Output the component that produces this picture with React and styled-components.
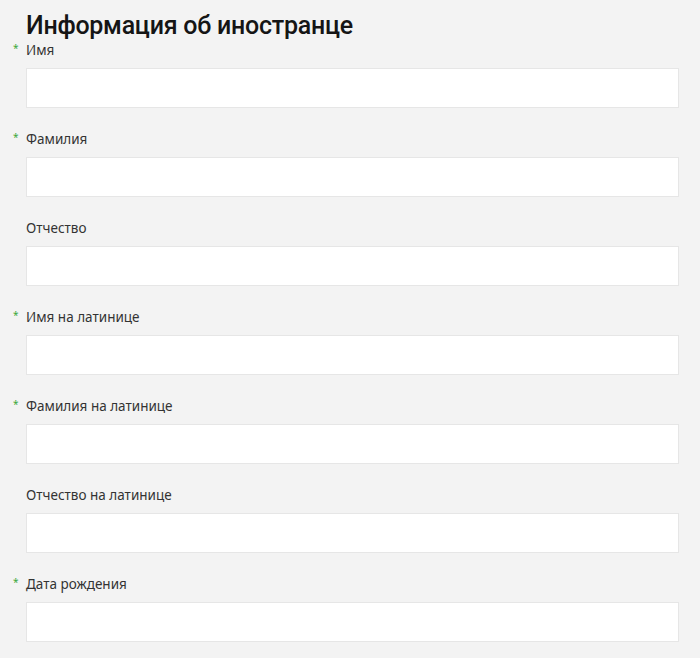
import React from "react";
import styled, { createGlobalStyle } from "styled-components";

const Global = createGlobalStyle`
  html, body { margin: 0; padding: 0; background: #f3f3f3; }
  body { font-family: "Noto Sans", "Open Sans", sans-serif; }
`;

const Page = styled.div`
  padding: 9px 21px 0 26px;
  display: flex;
  flex-direction: column;
`;

const Title = styled.h2`
  margin: 0 0 -3px 0;
  font-family: Roboto, "Noto Sans", sans-serif;
  font-size: 25px;
  line-height: 34px;
  font-weight: 500;
  color: #151515;
  letter-spacing: -0.25px;
`;

const Form = styled.div`
  display: flex;
  flex-direction: column;
  gap: 21px;
`;

const Field = styled.div`
  display: flex;
  flex-direction: column;
  gap: 8px;
`;

const Label = styled.label`
  display: block;
  height: 20px;
  font-size: 13.5px;
  line-height: 20px;
  color: #333;
`;

const Star = styled.span`
  display: inline-block;
  width: 13px;
  margin-left: -13px;
  line-height: 1;
  vertical-align: 3px;
  color: #3aa83a;
  font-size: 10px;
  visibility: ${(p) => (p.$show ? "visible" : "hidden")};
`;

const Input = styled.input`
  display: block;
  box-sizing: border-box;
  height: 40px;
  width: 100%;
  margin: 0;
  background: #fff;
  border: 1px solid #e6e6e6;
  border-radius: 0;
  outline: none;
  padding: 0 10px;
  font: inherit;
`;

const fields = [
  ["Имя", true],
  ["Фамилия", true],
  ["Отчество", false],
  ["Имя на латинице", true],
  ["Фамилия на латинице", true],
  ["Отчество на латинице", false],
  ["Дата рождения", true],
];

export default function App() {
  return (
    <>
      <Global />
      <Page>
        <Title>Информация об иностранце</Title>
        <Form>
          {fields.map(([label, req]) => (
            <Field key={label}>
              <Label>
                <Star $show={req}>*</Star>
                {label}
              </Label>
              <Input type="text" />
            </Field>
          ))}
        </Form>
      </Page>
    </>
  );
}
